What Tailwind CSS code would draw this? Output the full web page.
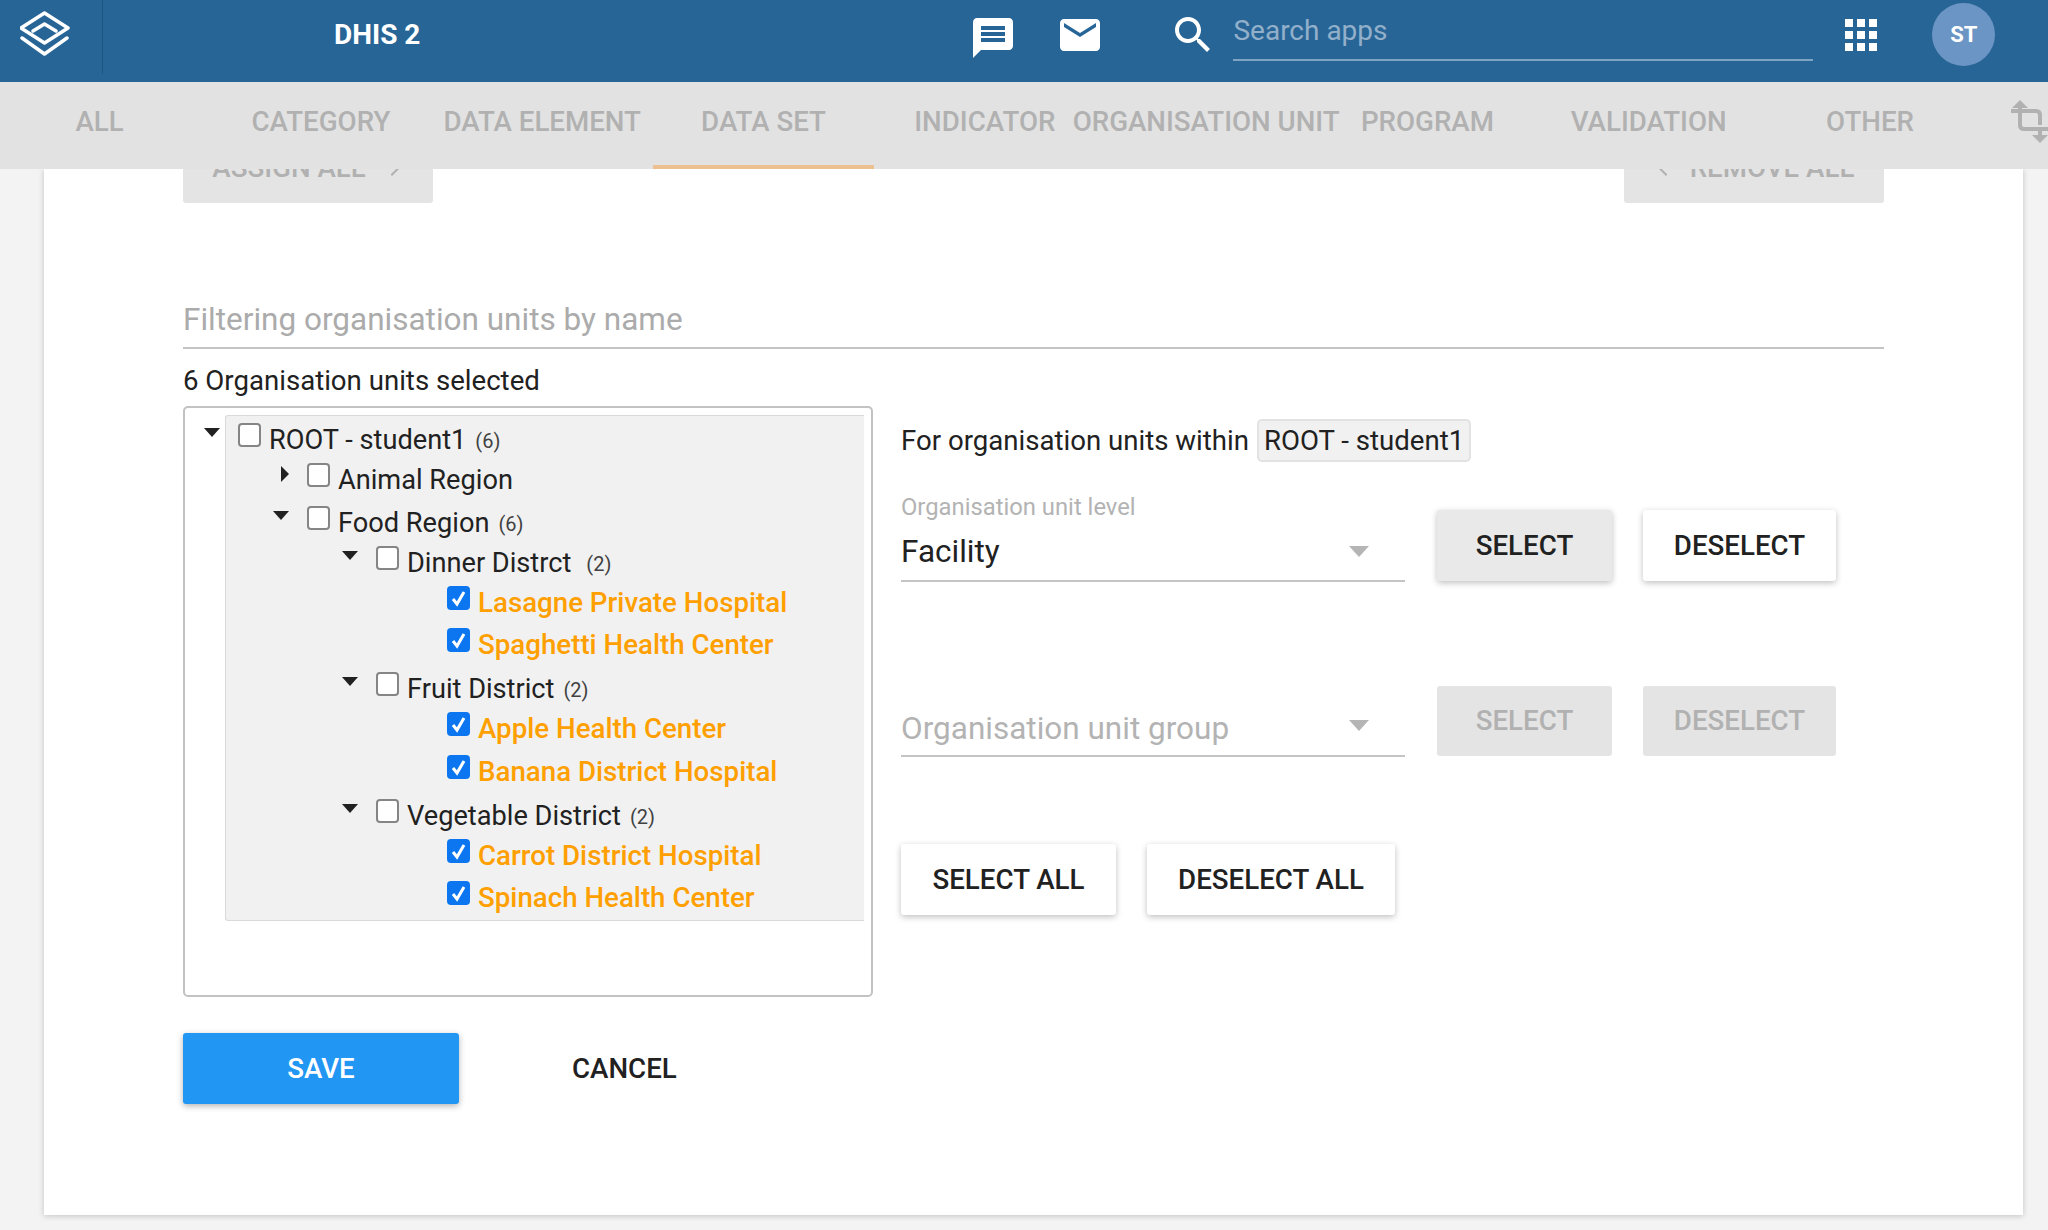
<!DOCTYPE html>
<html lang="en">
<head>
  <meta charset="UTF-8" />
  <title>DHIS 2 Maintenance</title>
  <script src="https://cdn.jsdelivr.net/npm/@tailwindcss/browser@4"></script>
</head>
<body class="bg-[#f3f3f3] font-['Roboto',sans-serif] text-[#212121] h-[1230px] w-[2048px] overflow-hidden">
  <!-- header -->
  <header class="bg-[#286597] h-[82px] flex items-start text-white">
    <div class="w-[103px] h-[74px] border-r border-[#1f5580] pl-[20px] pt-[11px]">
      <svg width="50" height="46" viewBox="0 0 50 46" fill="none" stroke="white" stroke-width="3.5" stroke-linejoin="round" stroke-linecap="round">
        <path d="M24.5 2 L48 17 L24.5 32 L1 17 Z" />
        <path d="M13 20 L24.5 13 L36 20" />
        <path d="M2 27 L24.5 43 L47 27" />
      </svg>
    </div>
    <div class="ml-[231px] mt-[18px] text-[28px] leading-[34px] font-bold">DHIS 2</div>
    <svg class="ml-[549px] mt-[14px]" width="48" height="48" viewBox="0 0 24 24" fill="white"><path d="M20 2H4c-1.1 0-1.99.9-1.99 2L2 22l4-4h14c1.1 0 2-.9 2-2V4c0-1.1-.9-2-2-2zm-2 12H6v-2h12v2zm0-3H6V9h12v2zm0-3H6V6h12v2z"/></svg>
    <svg class="ml-[39px] mt-[11px]" width="48" height="48" viewBox="0 0 24 24" fill="white"><path d="M20 4H4c-1.1 0-1.99.9-1.99 2L2 18c0 1.1.9 2 2 2h16c1.1 0 2-.9 2-2V6c0-1.1-.9-2-2-2zm0 4l-8 5-8-5V6l8 5 8-5v2z"/></svg>
    <svg class="ml-[65px] mt-[11px]" width="48" height="48" viewBox="0 0 24 24" fill="white"><path d="M15.5 14h-.79l-.28-.27C15.41 12.59 16 11.11 16 9.5 16 5.91 13.09 3 9.5 3S3 5.91 3 9.5 5.91 16 9.5 16c1.61 0 3.09-.59 4.23-1.57l.27.28v.79l5 4.99L20.49 19l-4.99-5zm-6 0C7.01 14 5 11.99 5 9.5S7.01 5 9.5 5 14 7.01 14 9.5 11.99 14 9.5 14z"/></svg>
    <div class="ml-[16px] mt-[12px] w-[580px] h-[49px] border-b-2 border-[#7fa3c2] text-[28px] leading-[38px] text-[#93b0ca]">Search apps</div>
    <svg class="ml-[24px] mt-[11px]" width="48" height="48" viewBox="0 0 24 24" fill="white"><path d="M4 8h4V4H4v4zm6 12h4v-4h-4v4zm-6 0h4v-4H4v4zm0-6h4v-4H4v4zm6 0h4v-4h-4v4zm6-10v4h4V4h-4zm-6 4h4V4h-4v4zm6 6h4v-4h-4v4zm0 6h4v-4h-4v4z"/></svg>
    <div class="ml-[47px] mt-[3px] w-[63px] h-[63px] rounded-full bg-[#6b95c4] flex items-center justify-center text-[22px] font-bold">ST</div>
  </header>

  <!-- section tabs -->
  <nav class="relative z-10 bg-[#e2e2e2] h-[87px] flex -ml-[11px] text-[27.7px] font-medium text-[#b1b1b1] overflow-hidden">
    <div class="w-[221.3px] shrink-0 flex items-center justify-center pb-[7px]">ALL</div>
    <div class="w-[221.3px] shrink-0 flex items-center justify-center pb-[7px]">CATEGORY</div>
    <div class="w-[221.3px] shrink-0 flex items-center justify-center pb-[7px]">DATA ELEMENT</div>
    <div class="w-[221.3px] shrink-0 flex items-center justify-center border-b-4 border-[#ecc08f] pb-[3px]">DATA SET</div>
    <div class="w-[221.3px] shrink-0 flex items-center justify-center pb-[7px]">INDICATOR</div>
    <div class="w-[221.3px] shrink-0 flex items-center justify-center pb-[7px] whitespace-nowrap">ORGANISATION UNIT</div>
    <div class="w-[221.3px] shrink-0 flex items-center justify-center pb-[7px]">PROGRAM</div>
    <div class="w-[221.3px] shrink-0 flex items-center justify-center pb-[7px]">VALIDATION</div>
    <div class="w-[221.3px] shrink-0 flex items-center justify-center pb-[7px]">OTHER</div>
    <svg class="shrink-0 ml-[27px] mt-[16px]" width="42" height="46" viewBox="0 0 42 46" fill="none" stroke="#b1b1b1" stroke-width="4" stroke-linejoin="round">
      <path d="M3 13 H28 Q32 13 32 17 V27" />
      <path d="M12 6 V27 Q12 31 16 31 H42" />
      <path d="M32 31 V38" />
      <path d="M12 2 L4 10 H20 Z M32 45 L24 37 H40 Z" fill="#b1b1b1" stroke="none" />
    </svg>
  </nav>

  <main class="ml-[44px] w-[1979px] h-[1046px] bg-white shadow-[0_1px_6px_rgba(0,0,0,0.2)] px-[139px]">
    <!-- assign row, scrolled mostly under the tabs -->
    <div class="flex justify-between h-[34px] overflow-hidden">
      <div class="w-[250px] h-[71px] -mt-[37px] bg-[#e4e4e4] rounded-[3px] flex items-center justify-center gap-[14px] text-[27.7px] font-medium text-[#b1b1b1]">
        <span>ASSIGN ALL</span>
        <svg width="24" height="24" viewBox="0 0 24 24" fill="#b1b1b1"><path d="M12 4l-1.41 1.41L16.17 11H4v2h12.17l-5.58 5.59L12 20l8-8z"/></svg>
      </div>
      <div class="w-[260px] h-[71px] -mt-[37px] bg-[#e4e4e4] rounded-[3px] flex items-center justify-center gap-[12px] text-[27.7px] font-medium text-[#b1b1b1]">
        <svg width="24" height="24" viewBox="0 0 24 24" fill="#b1b1b1"><path d="M20 11H7.83l5.59-5.59L12 4l-8 8 8 8 1.41-1.41L7.83 13H20z"/></svg>
        <span>REMOVE ALL</span>
      </div>
    </div>

    <div class="mt-[87px] h-[59px] border-b-2 border-[#c4c4c4] text-[31.5px] leading-[60px] text-[#ababab]">Filtering organisation units by name</div>
    <div class="mt-[16px] text-[27.6px] leading-[32px]">6 Organisation units selected</div>

    <div class="mt-[9px] flex">
      <!-- tree -->
      <div class="w-[690px] h-[591px] shrink-0 border-2 border-[#c2c2c2] rounded-[5px] pt-[7px] pl-[40px] pr-[7px]">
        <div id="tree" class="h-[506px] bg-[#f1f1f1] border border-r-0 border-[#d9d9d9] rounded-l-[3px] pt-[7px]"></div>
      </div>

      <!-- level / group selection -->
      <div class="ml-[28px] pt-[13px]">
        <div class="flex items-center h-[43px] text-[27.6px]">
          <span>For organisation units within</span>
          <span class="ml-[8px] h-[43px] px-[5px] flex items-center bg-[#f1f1f1] border-2 border-[#e2e2e2] rounded-[5px]">ROOT - student1</span>
        </div>

        <div class="mt-[28px] flex items-end">
          <div class="w-[504px] -mb-[1px]">
            <div class="text-[23.8px] leading-[34px] text-[#b3b3b3]">Organisation unit level</div>
            <div class="h-[58px] border-b-2 border-[#c4c4c4] flex items-center justify-between pr-[36px] text-[31.5px]">
              <span>Facility</span>
              <span class="mb-[2px] w-0 h-0 border-x-[10px] border-x-transparent border-t-[11px] border-t-[#b5b5b5]"></span>
            </div>
          </div>
          <div class="ml-[32px] w-[175px] h-[71px] bg-[#e9e9e9] rounded-[3px] shadow-[0_2px_6px_rgba(0,0,0,0.25)] flex items-center justify-center text-[27.7px] font-medium">SELECT</div>
          <div class="ml-[31px] w-[193px] h-[71px] bg-white rounded-[3px] shadow-[0_2px_6px_rgba(0,0,0,0.25)] flex items-center justify-center text-[27.7px] font-medium">DESELECT</div>
        </div>

        <div class="mt-[105px] flex items-end">
          <div class="w-[504px] h-[70px] -mb-[1px] border-b-2 border-[#c4c4c4] flex items-center justify-between pr-[36px] pt-[15px] text-[31.5px] text-[#b3b3b3]">
            <span>Organisation unit group</span>
            <span class="mb-[6px] w-0 h-0 border-x-[10px] border-x-transparent border-t-[11px] border-t-[#b5b5b5]"></span>
          </div>
          <div class="ml-[32px] w-[175px] h-[70px] bg-[#e4e4e4] rounded-[3px] flex items-center justify-center text-[27.7px] font-medium text-[#b1b1b1]">SELECT</div>
          <div class="ml-[31px] w-[193px] h-[70px] bg-[#e4e4e4] rounded-[3px] flex items-center justify-center text-[27.7px] font-medium text-[#b1b1b1]">DESELECT</div>
        </div>

        <div class="mt-[88px] flex gap-[31px]">
          <div class="w-[215px] h-[71px] bg-white rounded-[3px] shadow-[0_2px_6px_rgba(0,0,0,0.25)] flex items-center justify-center text-[27.7px] font-medium">SELECT ALL</div>
          <div class="w-[248px] h-[71px] bg-white rounded-[3px] shadow-[0_2px_6px_rgba(0,0,0,0.25)] flex items-center justify-center text-[27.7px] font-medium">DESELECT ALL</div>
        </div>
      </div>
    </div>

    <div class="mt-[36px] flex items-center">
      <div class="w-[276px] h-[71px] bg-[#2196f3] rounded-[3px] shadow-[0_2px_6px_rgba(0,0,0,0.3)] flex items-center justify-center text-[27.7px] font-medium text-white">SAVE</div>
      <div class="ml-[113px] text-[27.7px] font-medium">CANCEL</div>
    </div>
  </main>

  <script>
    // depth indent in px, row height in px, arrow: down / right / none
    const rows = [
      { name: "ROOT - student1", count: "(6)", indent: 0, h: 40, arrow: "down" },
      { name: "Animal Region", indent: 69, h: 43, arrow: "right" },
      { name: "Food Region", count: "(6)", indent: 69, h: 40, arrow: "down" },
      { name: "Dinner Distrct", count: "(2)", gap: true, indent: 138, h: 40, arrow: "down" },
      { name: "Lasagne Private Hospital", indent: 209, h: 42, checked: true },
      { name: "Spaghetti Health Center", indent: 209, h: 44, checked: true },
      { name: "Fruit District", count: "(2)", indent: 138, h: 40, arrow: "down" },
      { name: "Apple Health Center", indent: 209, h: 43, checked: true },
      { name: "Banana District Hospital", indent: 209, h: 44, checked: true },
      { name: "Vegetable District", count: "(2)", indent: 138, h: 40, arrow: "down" },
      { name: "Carrot District Hospital", indent: 209, h: 42, checked: true },
      { name: "Spinach Health Center", indent: 209, h: 40, checked: true }
    ];

    const arrows = {
      down: '<span class="mt-[5px] w-0 h-0 border-x-[8px] border-x-transparent border-t-[9px] border-t-[#212121]"></span>',
      right: '<span class="mt-[3px] ml-[8px] w-0 h-0 border-y-[8px] border-y-transparent border-l-[8px] border-l-[#212121]"></span>'
    };

    document.getElementById('tree').innerHTML = rows.map(r => `
      <div class="flex items-start pl-[12px]" style="height:${r.h}px;margin-left:${r.indent}px">
        <div class="-ml-[34px] w-[34px] h-[23px] shrink-0 flex items-start">${r.arrow ? arrows[r.arrow] : ''}</div>
        ${r.checked
          ? '<span class="w-[23px] h-[24px] shrink-0 rounded-[4px] bg-[#0b76ef] flex items-center justify-center"><svg width="15" height="17" viewBox="0 0 15 17" fill="none" stroke="white" stroke-width="3"><path d="M2 9 L6 14 L13 2"/></svg></span>'
          : '<span class="w-[23px] h-[24px] shrink-0 rounded-[4px] bg-white border-2 border-[#858585]"></span>'}
        <span class="ml-[8px] leading-[34px] whitespace-nowrap ${r.checked ? 'text-[27.7px] font-medium text-[#ff9f00]' : 'text-[27.2px]'}">${r.name}</span>
        ${r.count ? `<span class="${r.gap ? 'ml-[15px]' : 'ml-[9px]'} text-[20px] leading-[36px] text-[#424242]">${r.count}</span>` : ''}
      </div>
    `).join('');
  </script>
</body>
</html>
